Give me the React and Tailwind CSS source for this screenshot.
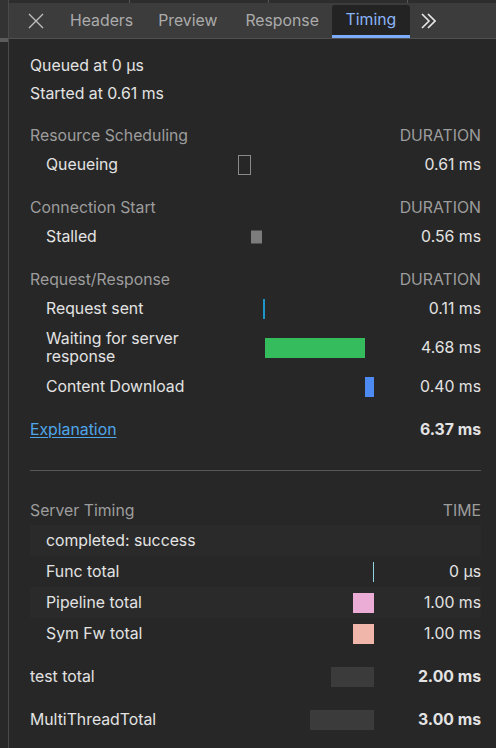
import React from 'react';

const Bar = ({ start, width, className }) => (
  <div className="relative w-[136px] h-full">
    <div
      className={`absolute top-1/2 -translate-y-1/2 h-[20px] ${className}`}
      style={{ left: start, width }}
    />
  </div>
);

const Row = ({ label, bar, value, bold, indent = true, tall, zebra, h = 'h-[30px]', className = '' }) => (
  <div className={`flex items-center ${tall ? 'h-[48px]' : h} ${zebra ? 'bg-[#2a2a2a]' : ''} ${className}`}>
    <div className={`flex-1 text-[#e3e3e3] ${indent ? 'pl-4' : ''} ${tall ? 'leading-[18px]' : ''}`}>{label}</div>
    {bar || <div className="w-[136px]" />}
    <div className={`w-[107px] text-right text-[#e3e3e3] ${bold ? 'font-bold' : ''}`}>{value}</div>
  </div>
);

const Header = ({ title, right = 'DURATION', className = '' }) => (
  <div className={`flex items-center justify-between h-[28px] text-[#9d9d9d] ${className}`}>
    <span>{title}</span>
    <span>{right}</span>
  </div>
);

export default function App() {
  return (
    <div
      className="w-[496px] h-[748px] bg-[#272727] flex text-[15.8px] overflow-hidden"
      style={{ fontFamily: 'Inter, "Liberation Sans", sans-serif' }}
    >
      <div className="w-[9px] flex flex-col border-r border-[#4a4a4a]">
        <div className="h-[38px] bg-[#333333]" />
        <div className="h-[4px] bg-[#5c5c5c]" />
        <div className="flex-1 bg-[#282828]" />
      </div>
      <div className="flex-1 flex flex-col">
        <div className="h-[3px] bg-[#2d2d2d] relative">
          <div className="absolute left-[120px] top-0 w-px h-full bg-[#555]" />
          <div className="absolute left-[259px] top-0 w-px h-full bg-[#555]" />
          <div className="absolute left-[398px] top-0 w-px h-full bg-[#555]" />
        </div>
        <div className="h-[36px] bg-[#3c3c3c] border-b border-[#505050] flex items-end text-[#ababab]">
          <div className="w-[54px] h-full flex items-center justify-center">
            <svg width="18" height="18" viewBox="0 0 18 18" stroke="#bdbdbd" strokeWidth="1.4" fill="none">
              <path d="M2 2 L16 16 M16 2 L2 16" />
            </svg>
          </div>
          <div className="h-full flex items-center pl-[7px] pr-[12px]">Headers</div>
          <div className="h-full flex items-center pl-[13px] pr-[14px]">Preview</div>
          <div className="h-full flex items-center pl-[14px] pr-[13px]">Response</div>
          <div className="h-[33px] w-[78px] bg-[#232323] rounded-t-[3px] flex flex-col">
            <div className="flex-1 flex items-center justify-center text-[#8ab4f8]">Timing</div>
            <div className="h-[3px] bg-[#7cacf8]" />
          </div>
          <div className="h-full flex items-center pl-[10px]">
            <svg width="16" height="18" viewBox="0 0 16 18" stroke="#e8e8e8" strokeWidth="1.6" fill="none">
              <path d="M2 2 L9 9 L2 16 M8 2 L15 9 L8 16" />
            </svg>
          </div>
        </div>

        <div className="pl-[21px] pr-[15px] pt-[13px] flex flex-col">
          <div className="h-[28px] flex items-center text-[#e3e3e3]">Queued at 0 µs</div>
          <div className="h-[28px] flex items-center text-[#e3e3e3]">Started at 0.61 ms</div>

          <Header title="Resource Scheduling" className="mt-[14px]" />
          <Row
            label="Queueing"
            value="0.61 ms"
            bar={<Bar start={0} width={13} className="border border-[#8a8a8a]" />}
          />

          <Header title="Connection Start" className="mt-[14px]" />
          <Row
            label="Stalled"
            value="0.56 ms"
            bar={<div className="relative w-[136px] h-full"><div className="absolute top-1/2 -translate-y-1/2 left-[13px] w-[11px] h-[13px] bg-[#7c7c7c]" /></div>}
          />

          <Header title="Request/Response" className="mt-[14px]" />
          <Row
            label="Request sent"
            value="0.11 ms"
            bar={<Bar start={25} width={2} className="bg-[#1d95c8]" />}
          />
          <Row
            tall
            label={<>Waiting for server<br />response</>}
            value="4.68 ms"
            bar={<Bar start={27} width={100} className="bg-[#35bd5d]" />}
          />
          <Row
            label="Content Download"
            value="0.40 ms"
            h="h-[29px]"
            bar={<Bar start={127} width={9} className="bg-[#4d8af2]" />}
          />

          <div className="flex items-center justify-between h-[28px] mt-[15px]">
            <span className="text-[#4fa6ea] underline underline-offset-2">Explanation</span>
            <span className="text-[#e3e3e3] font-bold">6.37 ms</span>
          </div>

          <div className="h-px bg-[#575757] mt-[26px]" />

          <Header title="Server Timing" right="TIME" className="mt-[26px]" />
          <Row zebra h="h-[31px]" label="completed: success" value="" />
          <Row
            h="h-[31px]"
            label="Func total"
            value="0 µs"
            bar={<Bar start={135} width={1} className="bg-[#8fd3e0]" />}
          />
          <Row
            zebra
            h="h-[31px]"
            label="Pipeline total"
            value="1.00 ms"
            bar={<Bar start={136 - 21} width={21} className="bg-[#ebacd6]" />}
          />
          <Row
            h="h-[31px]"
            label="Sym Fw total"
            value="1.00 ms"
            bar={<Bar start={136 - 21} width={21} className="bg-[#f0b6aa]" />}
          />
          <Row
            indent={false}
            bold
            label="test total"
            value="2.00 ms"
            className="mt-[13px]"
            bar={<Bar start={136 - 43} width={43} className="bg-[#3b3b3b]" />}
          />
          <Row
            indent={false}
            bold
            label="MultiThreadTotal"
            value="3.00 ms"
            className="mt-[13px]"
            bar={<Bar start={136 - 64} width={64} className="bg-[#3b3b3b]" />}
          />
        </div>
      </div>
    </div>
  );
}
